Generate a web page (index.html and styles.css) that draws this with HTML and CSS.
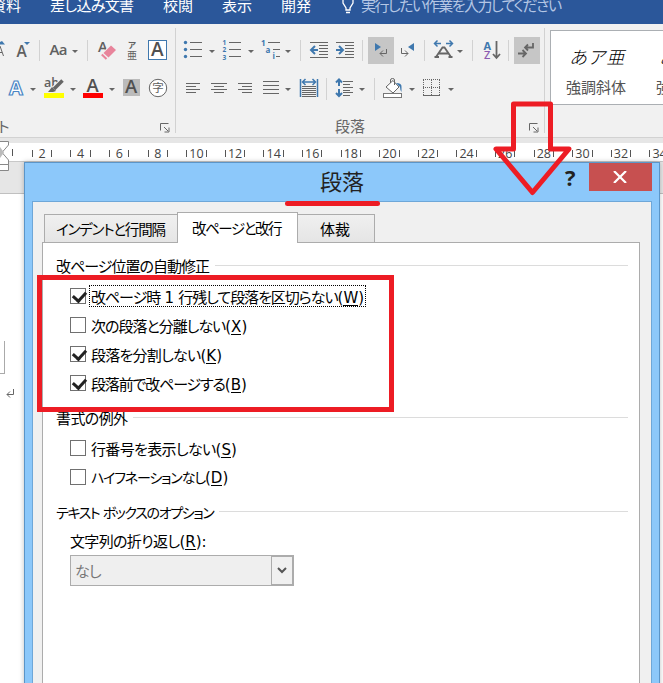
FILE: index.html
```html
<!DOCTYPE html>
<html lang="ja">
<head>
<meta charset="utf-8">
<title>段落</title>
<link rel="stylesheet" href="styles.css">
</head>
<body>
<nav class="menu">
  <span class="m-ref">資料</span><span class="m-mail">差し込み文書</span><span class="m-review">校閲</span><span class="m-view">表示</span><span class="m-dev">開発</span>
  <svg class="bulb" width="14" height="24" viewBox="341 0 14 24"><path d="M343 0V3L346 8V10H350V8L353 3V0M346 12.5H350" fill="none" stroke="#fff" stroke-width="1.3"/></svg>
  <span class="m-tell">実行したい作業を入力してください</span>
</nav>

<div class="ribbon">
  <section class="group font-group">
    <div class="row">
      <svg width="12" height="33" viewBox="0 34 12 33"><path class="fb" d="M0 44V42L2 41L5 44.5H0Z"/><path class="g" d="M0 46L3.5 56M0 52.500H2"/></svg>
      <svg width="28" height="33" viewBox="12 34 28 33"><text x="16.500" y="56.500" class="ico" font-size="15.500">A</text><path class="fb" d="M24 42H30L27 45Z"/><path class="sep" d="M39.5 40V61"/></svg>
      <svg width="48" height="33" viewBox="40 34 48 33"><text x="49.5" y="55" class="ico" font-size="15" textLength="18">Aa</text><path class="fg" d="M72 50H78L75 53Z"/><path class="sep" d="M87.5 40V61"/></svg>
      <svg width="37" height="33" viewBox="88 34 37 33"><text x="98" y="52" class="ico" font-size="14.500">A</text><path d="M100 55L111 44L117 49L106 60Z" fill="#f1f1f1"/><path d="M103.500 53L111 45.500L116 50L108.500 57.500Z" fill="#e8849b"/><path d="M101.8 54.500L106.500 59" stroke="#e8849b" stroke-width="2"/></svg>
      <svg width="20" height="33" viewBox="125 34 20 33"><text x="128" y="48" class="ico" font-size="8.500">ア</text><text x="127" y="59.3" class="ico thinner" font-size="10">亜</text></svg>
      <svg width="29" height="33" viewBox="145 34 29 33"><rect x="148.5" y="40.5" width="18" height="19" fill="#fff" stroke="#3f78ae"/><text x="151" y="56" class="ico b" font-size="19">A</text></svg>
    </div>
    <div class="row second">
      <svg width="40" height="30" viewBox="0 74 40 30"><text x="9" y="95" font-size="20" class="outline-a">A</text><path class="fg" d="M30 88H36L33 91Z"/></svg>
      <svg width="40" height="30" viewBox="40 74 40 30"><text x="44" y="86.500" class="ico" font-size="12.5">ab</text><path d="M62.500 81L54 89" stroke="#f1f1f1" stroke-width="6"/><path d="M62.500 80.500L54 89" stroke="#666" stroke-width="3.500"/><path class="fg" d="M52 87L56 91L53 92H48Z"/><path d="M44 93H64V98H44Z" fill="#ff0"/><path class="fg" d="M70 88H76L73 91Z"/></svg>
      <svg width="40" height="30" viewBox="80 74 40 30"><text x="86.500" y="92" class="ico b" font-size="18.500">A</text><path d="M83 93H103V98H83Z" fill="red"/><path class="fg" d="M109 88H115L112 91Z"/></svg>
      <svg width="54" height="30" viewBox="120 74 54 30"><path d="M123 79H140V96H123Z" fill="#bbb"/><text x="125" y="93" class="ico b" font-size="18.500">A</text><circle cx="158" cy="88" r="8.700" fill="#fff" stroke="#666"/><text x="152.300" y="92.300" class="ico thinner" font-size="11.500">字</text></svg>
    </div>
    <div class="caption"><span class="cap-font">ト</span>
      <svg width="12" height="12" viewBox="0 0 12 12"><path class="g" d="M.5 7.500V.5H8.500M4 4L8 8M9 4.500V9H4.500"/></svg></div>
  </section>

  <section class="group para-group">
    <div class="row">
      <svg width="42" height="33" viewBox="176 34 42 33"><g class="fb"><circle cx="185.500" cy="42.500" r="1.700"/><circle cx="185.500" cy="49.500" r="1.700"/><circle cx="185.500" cy="56.500" r="1.700"/></g><path class="g" d="M190 42.500H202M190 49.500H202M190 56.500H202"/><path class="fg" d="M209 50H215L212 53Z"/></svg>
      <svg width="40" height="33" viewBox="218 34 40 33"><g class="num small"><text x="222.500" y="45">1</text><text x="222.500" y="52.300">2</text><text x="222.500" y="59.500">3</text></g><path class="g" d="M229 42.500H241M229 49.500H241M229 56.500H241"/><path class="fg" d="M248 50H254L251 53Z"/></svg>
      <svg width="44" height="33" viewBox="258 34 44 33"><g class="num"><text x="261" y="46">1</text><text x="265.500" y="52.500">a</text><text x="272.500" y="59">i</text></g><path class="g" d="M268 42.500H280M273 49.500H280M276 56.500H280"/><path class="fg" d="M285 50H291L288 53Z"/><path class="sep" d="M300.500 40V61"/></svg>
      <svg width="30" height="33" viewBox="302 34 30 33"><path class="g" d="M310 42.500H328M319 45.500H328M319 48.500H328M319 51.500H328M319 54.500H328M310 57.500H328"/><path class="bl" d="M318 50H311.500M315 46L311 50L315 54"/></svg>
      <svg width="34" height="33" viewBox="332 34 34 33"><path class="g" d="M336 42.500H354M345 45.500H354M345 48.500H354M345 51.500H354M345 54.500H354M336 57.500H354"/><path class="bl" d="M336 50H342.500M339 46L343 50L339 54"/><path class="sep" d="M362.500 40V61"/></svg>
      <svg width="28" height="33" viewBox="366 34 28 33"><path d="M368 37H394V64H368Z" fill="#c6c6c6"/><path class="fb" d="M375 43L381 47L375 51Z"/><path class="g" d="M386.500 49V53.500H380M383 50.500L380 53.500L383 56.500"/></svg>
      <svg width="34" height="33" viewBox="394 34 34 33"><path class="g" d="M401.500 48V53.500H408M405 50.500L408 53.500L405 56.500"/><path class="fb" d="M414 43L408 47L414 51Z"/><path class="sep" d="M424.500 40V61"/></svg>
      <svg width="48" height="33" viewBox="428 34 48 33"><path class="bl thin" d="M441 43.500H435M437.500 40.500L434.500 43.500L437.500 46.500M446 43.500H452M449.500 40.500L452.500 43.500L449.500 46.500"/><path d="M436 57L442.500 47.500H444.500L451 57M439 53.500H448M434.500 57H439M448.500 57H452.500" fill="none" stroke="#666" stroke-width="1.800"/><path class="fg" d="M457 50H463L460 53Z"/><path class="sep" d="M472.500 40V61"/></svg>
      <svg width="36" height="33" viewBox="476 34 36 33"><text x="483.500" y="49.500" class="num letter">A</text><text x="484" y="59" class="zed">Z</text><path class="g two" d="M496.500 41V57M493 54L496.500 58L500 54"/><path class="sep" d="M508.500 40V61"/></svg>
      <svg width="32" height="33" viewBox="512 34 32 33"><path d="M514 37H540V64H514Z" fill="#c6c6c6"/><path class="g two" d="M533 43V47.500H525M528 44.500L525 47.500L528 50.500M518 53.500H526M522.500 50L526 53.500L522.500 57"/></svg>
    </div>
    <div class="row second">
      <svg width="29" height="30" viewBox="176 74 29 30"><path class="g" d="M186 83.500H200M186 86.500H196M186 89.500H200M186 92.500H196"/></svg>
      <svg width="29" height="30" viewBox="205 74 29 30"><path class="g" d="M211 83.500H227M214 86.500H224M211 89.500H227M214 92.500H224"/></svg>
      <svg width="26" height="30" viewBox="234 74 26 30"><path class="g" d="M238 83.500H252M242 86.500H252M238 89.500H252M242 92.500H252"/></svg>
      <svg width="36" height="30" viewBox="260 74 36 30"><path class="g" d="M263 81.500H279M263 85.500H279M263 89.500H279M263 93.500H279"/><path class="fg" d="M285 88H291L288 91Z"/></svg>
      <svg width="34" height="30" viewBox="296 74 34 30"><path class="bl thin" d="M300.500 79V97M317.500 79V97M303 82H315M305.500 79L302.500 82L305.500 85M312.500 79L315.500 82L312.500 85"/><path class="g" d="M302 86.500H316M302 88.500H316M302 90.500H316M302 92.500H316M302 94.500H316M302 96.500H316"/><path class="sep" d="M326.500 78V100"/></svg>
      <svg width="48" height="30" viewBox="330 74 48 30"><path class="bl" d="M339 80V86M336 82.500L339 79.500L342 82.500M339 89V95M336 93L339 96L342 93"/><path class="g" d="M343 81.500H353M343 84.500H350M343 87.500H353M343 90.500H350M343 92.500H353M343 95.500H350"/><path class="fg" d="M359 88H365L362 91Z"/><path class="sep" d="M374.500 78V100"/></svg>
      <svg width="40" height="30" viewBox="378 74 40 30"><path d="M386 87L393 80.500L399 87L393 93Z" fill="#fff" stroke="#666"/><path class="g" d="M390.500 83V80Q390.500 78.500 392.500 78.500T394.500 80V85"/><path d="M396 83Q402 83 401.500 87V92Q400 90 400 87Z" class="fb"/><rect x="383.500" y="93.500" width="18" height="4" fill="#fff" stroke="#777"/><path class="fg" d="M409 88H415L412 91Z"/></svg>
      <svg width="46" height="30" viewBox="418 74 46 30"><path d="M423 79.500H440M423.500 80V95M431.500 80V95M439.500 80V95M423 87.500H440" fill="none" stroke="#666" stroke-dasharray="1 1"/><path class="g" d="M423 95.500H440"/><path class="fg" d="M448 88H454L451 91Z"/></svg>
    </div>
    <div class="caption para"><span class="cap-para">段落</span>
      <svg width="12" height="12" viewBox="0 0 12 12"><path class="g" d="M.5 7.500V.5H8.500M4 4L8 8M9 4.500V9H4.500"/></svg></div>
  </section>

  <section class="gallery">
    <div class="style"><span class="sample">あア亜</span><span class="name">強調斜体</span></div>
    <div class="style"><span class="sample">あア亜</span><span class="name">強調斜体</span></div>
  </section>
</div>

<div class="ruler">
  <span class="first"></span><span class="cell">2</span><span class="cell">4</span><span class="cell">6</span><span class="cell">8</span><span class="cell">10</span><span class="cell">12</span><span class="cell">14</span><span class="cell">16</span><span class="cell">18</span><span class="cell">20</span><span class="cell">22</span><span class="cell">24</span><span class="cell">26</span><span class="cell">28</span><span class="cell">30</span><span class="cell">32</span><span class="cell">34</span>
  <svg class="indent" width="10" height="31" viewBox="0 139 10 31"><path d="M-8 140.500H8.500V144L2 151.500L8.500 159V163.500H-8ZM-8 163.500H8.500V169.500H-8Z" fill="#fff" stroke="#888"/><path d="M0 146V157L4 151.500Z" fill="#bbb"/></svg>
</div>
<main class="page">
  <div class="text-frame"></div>
  <svg class="return" width="9" height="10" viewBox="0 0 9 10"><path class="g" d="M7.500 0V5.500H1M4 2.500L1 5.500L4 8.500"/></svg>
</main>

<div class="dialog">
  <header class="titlebar">
    <span class="title">段落</span>
    <span class="help">?</span>
    <span class="close"><svg width="14" height="12" viewBox="0 0 14 12"><path d="M1 0L13 12M13 0L1 12" stroke="#fff" stroke-width="2.200"/></svg></span>
  </header>
  <div class="client">
    <div class="tabs">
      <div class="tab"><span class="t1">インデントと行間隔</span></div>
      <div class="tab active"><span class="t2">改ページと改行</span></div>
      <div class="tab last"><span class="t3">体裁</span></div>
    </div>
    <div class="panel">
      <div class="legend"><span class="h1">改ページ位置の自動修正</span></div>
      <div class="options">
        <div class="opt on focus"><i></i><span class="o1">改ページ時 <b class="count">1</b> 行残して段落を区切らない<b>(<u>W</u>)</b></span></div>
        <div class="opt"><i></i><span class="o2">次の段落と分離しない<b>(<u>X</u>)</b></span></div>
        <div class="opt on"><i></i><span class="o3">段落を分割しない<b>(<u>K</u>)</b></span></div>
        <div class="opt on"><i></i><span class="o4">段落前で改ページする<b>(<u>B</u>)</b></span></div>
      </div>
      <div class="legend second-legend"><span class="h2">書式の例外</span></div>
      <div class="options exceptions">
        <div class="opt"><i></i><span class="o5">行番号を表示しない<b>(<u>S</u>)</b></span></div>
        <div class="opt"><i></i><span class="o6">ハイフネーションなし<b>(<u>D</u>)</b></span></div>
      </div>
      <div class="legend third-legend"><span class="h3">テキスト ボックスのオプション</span></div>
      <div class="field-label"><span class="o7">文字列の折り返し<b>(<u>R</u>):</b></span></div>
      <div class="select"><span>なし</span><div class="drop"><svg width="10" height="7" viewBox="0 0 10 7"><path d="M1 1L5 5L9 1" fill="none" stroke="#555" stroke-width="2"/></svg></div></div>
    </div>
  </div>
</div>

<svg class="marks" width="663" height="683" viewBox="0 0 663 683"><g fill="none" stroke="#ed1c24" stroke-width="5"><path d="M39.500 277.500H391.500V409.500H39.500Z"/><path d="M287.500 203.500H377.500" stroke-linecap="round"/><path d="M513.500 104H550.500V149H569L532.500 192.500L496 149H513.500Z" stroke-linejoin="round"/></g></svg>
</body>
</html>
```

FILE: styles.css
```css
* { box-sizing: border-box; }
body {
  margin: 0;
  width: 663px;
  height: 683px;
  overflow: hidden;
  position: relative;
  background: #fff;
  color: #000;
  font: 15px/20px "Noto Sans CJK JP", sans-serif;
  font-feature-settings: "palt";
}
svg { display: block; flex: none; }
span { white-space: nowrap; }

.menu { display: flex; height: 24px; background: #2b579a; color: #fff; overflow: hidden; }
.menu span { flex: none; margin-top: -5px; }
.menu .m-ref { width: 59px; margin-left: -9px; }
.menu .m-mail { width: 113px; letter-spacing: -.65px; }
.m-review, .m-view { width: 59px; }
.m-dev { width: 60px; }
.bulb { margin-right: 6px; }
.menu .m-tell { color: #b4c6e4; letter-spacing: -1.5px; }

.ribbon { display: flex; height: 114px; background: #f1f1f1; border-bottom: 1px solid #d2d2d2; overflow: hidden; }
.group { flex: none; height: 105px; margin-top: 4px; padding-top: 6px; border-right: 1px solid #d2d2d2; }
.font-group { width: 176px; }
.para-group { width: 369px; }
.row { display: flex; height: 33px; }
.row.second { margin-top: 7px; height: 30px; }
.caption { display: flex; justify-content: space-between; margin-top: 12px; height: 20px; color: #666; padding-right: 3px; }
.caption svg { margin-top: 7px; }
.caption.para { padding-left: 159px; }
.cap-font { margin-left: -2px; }

.g { fill: none; stroke: #666; stroke-width: 1; }
.two { stroke-width: 1.8; }
.fg { fill: #666; }
.fb { fill: #3f78ae; }
.bl { fill: none; stroke: #3f78ae; stroke-width: 2; }
.thin { stroke-width: 1.5; }
.sep { stroke: #d2d2d2; }
.ico { fill: #606060; font-family: "Open Sans", "Noto Sans CJK JP", sans-serif; font-weight: 600; }
.ico.b { fill: #505050; }
.ico.thinner { font-weight: 400; }
.num { fill: #3f78ae; font: 700 8px "Open Sans", sans-serif; }
.num.small { font-size: 6.5px; }
.num.letter { font-size: 11px; }
.zed { fill: #8c5bb0; font: 600 11px "Open Sans", sans-serif; }
.outline-a { fill: #fff; stroke: #4a86c5; stroke-width: 1.2; font-family: "Open Sans", sans-serif; font-weight: 700; }

.gallery { display: flex; flex: none; width: 160px; height: 75px; margin: 6px 0 0 5px; padding-left: 15px; background: #fff; border: 1px solid #abafb3; }
.style { display: flex; flex-direction: column; flex: none; width: 90px; }
.sample { margin: 15px 0 0 3px; font-size: 18px; line-height: 20px; font-style: italic; font-weight: 300; font-feature-settings: normal; letter-spacing: .6px; }
.name { margin-top: 11px; color: #555; }

.ruler { display: flex; position: relative; height: 19px; margin-top: 5px; padding-top: 1px; border-bottom: 1px solid #c8c8c8; background: #fff; color: #444; font: 12.500px/17px "Open Sans", sans-serif; }
.ruler::before { content: ""; position: absolute; left: 0; top: -5px; width: 663px; height: 5px; background: #e6e6e6; }
.first { flex: none; width: 22.800px; padding: 5px 0 0 12px; }
.first::before, .cell::before, .cell::after { content: ""; flex: none; display: block; width: 1px; height: 7px; background: #555; }
.cell { display: flex; flex: none; align-items: center; justify-content: space-between; width: 38.600px; height: 18px; padding: 0 9.100px; }
.indent { position: absolute; left: 0; top: -3px; }

.page { height: 521px; border-top: 31px solid #e6e6e6; background: #fff; }
.page::before { content: ""; display: block; height: 1px; background: #c0c0c0; }
.text-frame { width: 5px; height: 33px; margin-top: 147px; border: solid #aaa; border-width: 0 1px 1px 0; }
.return { margin: 15px 0 0 6px; }

.dialog { position: absolute; left: 24px; top: 162px; width: 636px; height: 540px; background: #8cc8fa; border: 1px solid #5b95c8; padding: 0 7px; box-shadow: 0 0 5px rgba(0,0,0,.25); }
.titlebar { display: flex; height: 38px; }
.title { flex: none; width: 533px; padding: 2px 0 0 288px; font-size: 22px; line-height: 30px; color: #222; }
.help { flex: none; width: 24px; font: 700 22px/28px "Open Sans", sans-serif; color: #222; }
.close { display: flex; align-items: center; justify-content: center; flex: none; width: 63px; height: 28px; padding-right: 1px; background: #c75050; }
.client { height: 500px; background: #f0f0f0; border: 1px solid #6ea7d8; padding: 10px 11px 0 9px; }
.tabs { display: flex; height: 30px; align-items: flex-end; padding-left: 2px; position: relative; }
.tab { height: 28px; width: 133px; padding: 4px 0 0 11px; border: 1px solid #acacac; border-right: 0; border-bottom: 0; background: linear-gradient(#f0f0f0, #e5e5e5); }
.tab.active { height: 31px; width: 121px; margin-bottom: -1px; padding: 5px 0 0 14px; background: #fff; border: 1px solid #acacac; border-bottom: 0; z-index: 1; }
.tab.last { width: 77px; border-right: 1px solid #acacac; border-left: 0; padding-left: 22px; }
.t1 { font-size: 14.5px; letter-spacing: -1.2px; }
.t2 { font-size: 14.5px; letter-spacing: -1.45px; }
.panel { height: 470px; background: #fff; border: 1px solid #acacac; padding: 13px 11px 0 13px; }
.legend { display: flex; height: 20px; align-items: center; gap: 6px; }
.legend::after { content: ""; flex: 1; height: 1px; background: #dcdcdc; margin-top: -2px; }
.h1 { letter-spacing: -1px; }
.h2 { letter-spacing: -.6px; }
.h3 { font-size: 14px; letter-spacing: -1.35px; word-spacing: 1.5px; }
.options { padding: 5px 0 0 14px; }
.exceptions { padding-top: 5px; }
.opt { display: flex; align-items: center; height: 29px; }
.opt i { position: relative; width: 16px; height: 16px; margin: 0 3px 0 0; border: 1px solid #707070; background: #fff; }
.opt.on i::after { content: ""; position: absolute; left: 4px; top: 0; width: 6px; height: 10px; border: solid #222; border-width: 0 3px 3px 0; transform: rotate(42deg); }
.opt span { padding: 0 1px; border: 1px solid transparent; height: 22px; line-height: 21px; }
.opt.focus span { border: 1px dotted #000; }
.opt b, .field-label b { font: 15px/15px "DejaVu Sans", sans-serif; letter-spacing: 0; }
.opt .count { margin: 0 2px; }
u { text-decoration: none; border-bottom: 1px solid #000; display: inline-block; line-height: 14px; }
.o1 { letter-spacing: -1.05px; }
.o2 { letter-spacing: -1px; }
.o3 { letter-spacing: -.75px; }
.o4 { letter-spacing: -1.15px; }
.o5 { letter-spacing: -.65px; }
.o6 { font-size: 14px; letter-spacing: -1.15px; }
.o7 { letter-spacing: -.65px; }
.second-legend { margin-top: 11px; }
.third-legend { margin-top: 11px; }
.field-label { height: 20px; margin: 9px 0 4px 14px; }
.select { display: flex; justify-content: space-between; width: 224px; height: 31px; margin-left: 14px; padding-left: 4px; border: 1px solid #acacac; background: #efefef; color: #777; line-height: 30px; }
.select span { letter-spacing: -.8px; }
.drop { display: flex; align-items: center; justify-content: center; width: 22px; border: 1px solid #acacac; background: #f0f0f0; }
.marks { position: absolute; left: 0; top: 0; }
```
